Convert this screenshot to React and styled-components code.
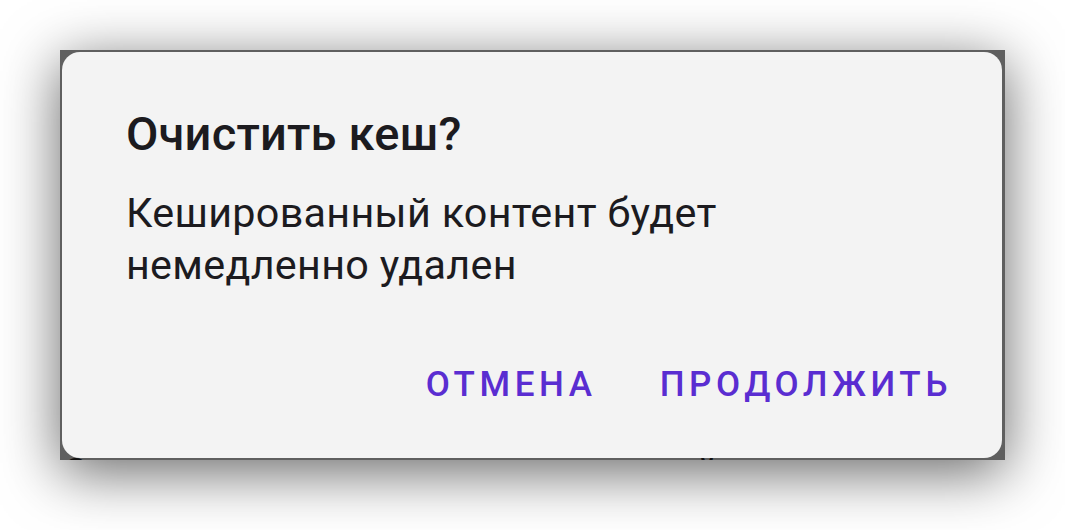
import React from "react";
import styled, { createGlobalStyle } from "styled-components";

const Global = createGlobalStyle`
  html, body { margin: 0; padding: 0; background: #ffffff; }
  body { font-family: Roboto, "Noto Sans", sans-serif; }
`;

const Page = styled.div`
  width: 1065px;
  height: 530px;
  padding: 50px 0 0 60px;
  box-sizing: border-box;
  overflow: hidden;
`;

const Frame = styled.div`
  position: relative;
  width: 945px;
  height: 410px;
  background: #5f5f5f;
  box-shadow: 0 12px 55px rgba(0, 0, 0, 0.6);
  overflow: hidden;
  display: flex;
  flex-direction: column;
  justify-content: flex-end;
`;

const BehindLine = styled.div`
  font-size: 40px;
  line-height: 40px;
  color: #111111;
  white-space: nowrap;
  padding-left: 2px;
  margin-bottom: -34px;
  letter-spacing: 0.5px;
`;

const Dialog = styled.div`
  position: absolute;
  left: 2px;
  top: 2px;
  right: 3px;
  bottom: 2px;
  background: #f3f3f3;
  border-radius: 18px;
  box-sizing: border-box;
  padding: 58px 50px 0 64px;
  display: flex;
  flex-direction: column;
`;

const Title = styled.h2`
  margin: 0;
  font-family: Roboto, sans-serif;
  font-weight: 500;
  font-size: 47px;
  line-height: 47px;
  color: #1c1b1f;
  letter-spacing: 0.2px;
`;

const Body = styled.p`
  margin: 30px 0 0;
  font-family: Roboto, sans-serif;
  font-weight: 400;
  font-size: 41.3px;
  line-height: 52px;
  color: #1c1b1f;
  letter-spacing: 0.3px;
`;

const Actions = styled.div`
  margin-top: auto;
  margin-bottom: 53px;
  display: flex;
  justify-content: flex-end;
  gap: 63px;
`;

const ActionButton = styled.button`
  border: none;
  background: transparent;
  padding: 0;
  font-family: Roboto, sans-serif;
  font-weight: 500;
  font-size: 35px;
  line-height: 40px;
  letter-spacing: 4.6px;
  color: #5a2dd1;
  text-transform: uppercase;
  cursor: pointer;
`;

export default function App() {
  return (
    <>
      <Global />
      <Page>
        <Frame>
          <BehindLine>Сплвлн зплансрвн ваз цсрнплвнйь в</BehindLine>
          <Dialog>
            <Title>Очистить кеш?</Title>
            <Body>
              Кешированный контент будет
              <br />
              немедленно удален
            </Body>
            <Actions>
              <ActionButton>Отмена</ActionButton>
              <ActionButton>Продолжить</ActionButton>
            </Actions>
          </Dialog>
        </Frame>
      </Page>
    </>
  );
}
